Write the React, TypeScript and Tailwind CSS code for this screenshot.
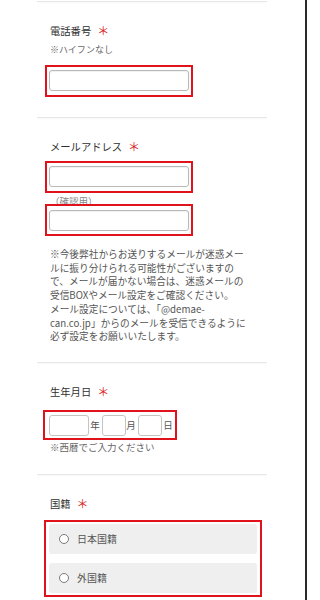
import React from "react";

const Req = () => (
  <span className="ml-[6px] text-[12px] leading-[14px] text-[#d9241c]">＊</span>
);

const Label = ({ children }: { children: React.ReactNode }) => (
  <div className="flex h-[14px] items-center text-[10.3px] leading-[14px] text-[#2f2f2f]">
    <span>{children}</span>
    <Req />
  </div>
);

const Sep = () => (
  <div className="h-px bg-[#e7e7e7] shadow-[0_1px_2px_rgba(0,0,0,0.05)]" />
);

const TextInput = () => (
  <div className="h-[21px] w-full rounded-[3px] border border-[#b9b9b9] bg-white shadow-[inset_0_1px_1px_rgba(0,0,0,0.06)]" />
);

const SmallInput = ({ w }: { w: string }) => (
  <div className={`h-[21px] ${w} rounded-[3px] border border-[#c4c4c4] bg-white`} />
);

const Radio = ({ label }: { label: string }) => (
  <div className="flex h-[30px] items-center rounded-[3px] bg-[#efefef] pl-[10px]">
    <span className="h-[10px] w-[10px] rounded-full border border-[#7a7a7a] bg-white" />
    <span className="ml-[8px] text-[10px] leading-[12px] text-[#555]">{label}</span>
  </div>
);

export default function App() {
  return (
    <div
      className="flex h-[600px] w-[307px] overflow-hidden bg-white"
      style={{ fontFamily: '"Noto Sans CJK JP", "Noto Sans", sans-serif' }}
    >
      <div className="w-[305px]">
        <div className="ml-[37px] w-[230px]">
          <div className="mt-[1px]">
            <Sep />
          </div>

          {/* 電話番号 */}
          <section className="pl-[13px] pt-[22px] pb-[20px]">
            <Label>電話番号</Label>
            <div className="mt-[6px] text-[9px] leading-[12px] text-[#666]">※ハイフンなし</div>
            <div className="-ml-[5px] mt-[9px] w-[148px] border-2 border-[#e0121c] px-[2px] pt-[3px] pb-[4px]">
              <TextInput />
            </div>
          </section>
          <Sep />

          {/* メールアドレス */}
          <section className="pl-[13px] pt-[22px] pb-[18px]">
            <Label>メールアドレス</Label>
            <div className="-ml-[5px] mt-[7px] w-[148px] border-2 border-[#e0121c] px-[2px] pt-[3px] pb-[4px]">
              <TextInput />
            </div>
            <div className="mt-[2px] text-[9.5px] leading-[12px] text-[#888]">（確認用）</div>
            <div className="relative -ml-[5px] -mt-[3px] w-[148px] border-2 border-[#e0121c] px-[2px] pt-[4px] pb-[3px]">
              <TextInput />
            </div>
            <div className="mt-[12px] w-[205px] text-[9.7px] leading-[13.7px] text-[#555]">
              <div className="whitespace-nowrap">※今後弊社からお送りするメールが迷惑メー</div>
              <div className="whitespace-nowrap">ルに振り分けられる可能性がございますの</div>
              <div className="whitespace-nowrap">で、メールが届かない場合は、迷惑メールの</div>
              <div className="whitespace-nowrap">受信BOXやメール設定をご確認ください。</div>
              <div className="whitespace-nowrap">メール設定については、「@demae-</div>
              <div className="whitespace-nowrap">can.co.jp」からのメールを受信できるように</div>
              <div className="whitespace-nowrap">必ず設定をお願いいたします。</div>
            </div>
          </section>
          <Sep />

          {/* 生年月日 */}
          <section className="pl-[13px] pt-[22px] pb-[21px]">
            <Label>生年月日</Label>
            <div className="-ml-[7px] mt-[11px] flex w-[134px] items-center border-2 border-[#e0121c] pl-[4px] pr-[2px] pt-[3px] pb-[2px]">
              <SmallInput w="w-[40px]" />
              <span className="ml-[1px] w-[10px] text-center text-[9.5px] leading-[12px] text-[#555]">年</span>
              <div className="ml-[2px]">
                <SmallInput w="w-[24px]" />
              </div>
              <span className="w-[10px] text-center text-[9.5px] leading-[12px] text-[#555]">月</span>
              <div className="ml-[2px]">
                <SmallInput w="w-[24px]" />
              </div>
              <span className="ml-[1px] w-[10px] text-center text-[9.5px] leading-[12px] text-[#555]">日</span>
            </div>
            <div className="mt-[1px] text-[9.5px] leading-[12px] text-[#666]">※西暦でご入力ください</div>
          </section>
          <Sep />

          {/* 国籍 */}
          <section className="pl-[13px] pt-[22px]">
            <Label>国籍</Label>
            <div className="-ml-[6px] mt-[9px] flex w-[218px] flex-col gap-[9px] border-2 border-[#e0121c] px-[3px] py-[2px]">
              <Radio label="日本国籍" />
              <Radio label="外国籍" />
            </div>
          </section>
        </div>
      </div>
      <div className="w-[2px] bg-[#2b2b2b]" />
    </div>
  );
}
